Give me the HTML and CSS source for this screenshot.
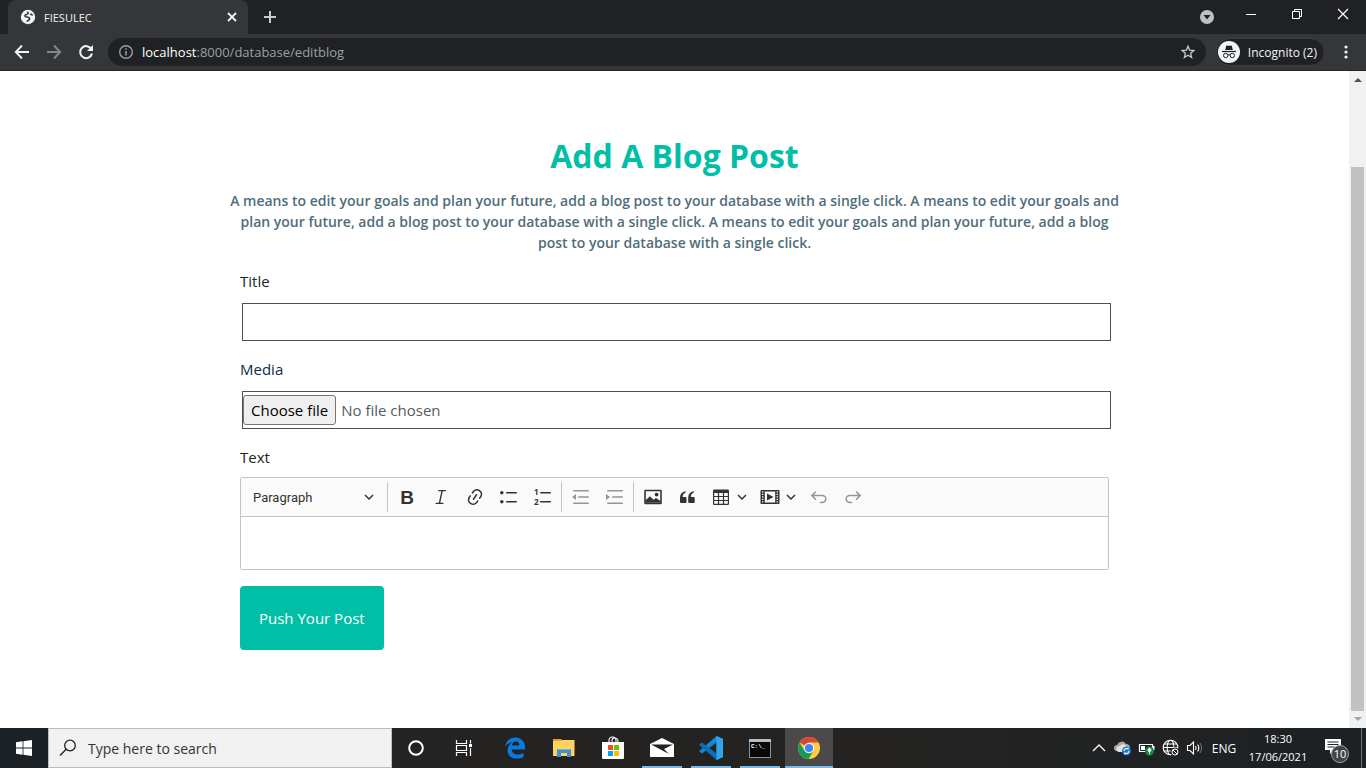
FILE: index.html
```html
<!DOCTYPE html>
<html lang="en">
<head>
<meta charset="utf-8">
<title>FIESULEC</title>
<link rel="stylesheet" href="styles.css">
</head>
<body>
<div class="desktop">
  <header class="browser">
    <div class="tabstrip">
      <div class="tab">
        <svg class="favicon" width="16" height="16" viewBox="0 0 16 16"><circle cx="8" cy="8" r="7.2" fill="#f1f3f4"/><path d="M7 3.200c1.500 0 1.300 1.200.6 1.800-.8.700-2.600.6-2.700 1.900 0 1.100 1.800 1 3.200 1.300 1.600.3 1.900 1.500 1.100 2.400-.6.700-1.800 1-2.400 2M10.500 4.500c.2 1.200 1.200 1.400 2.300 1.500" fill="none" stroke="#35363a" stroke-width="1.600"/></svg>
        <span class="tab-title">FIESULEC</span>
        <button class="icon-btn tab-close" aria-label="Close tab"><svg width="10" height="10" viewBox="0 0 10 10"><path d="M1 1l8 8M9 1L1 9" stroke="#f1f3f4" stroke-width="1.800"/></svg></button>
      </div>
      <button class="icon-btn new-tab" aria-label="New tab"><svg width="14" height="14" viewBox="0 0 14 14"><path d="M7 1v12M1 7h12" stroke="#c8cacd" stroke-width="2"/></svg></button>
      <div class="window-controls">
        <button class="icon-btn win-search" aria-label="Search tabs"><svg width="16" height="16" viewBox="0 0 16 16"><circle cx="8" cy="8" r="7" fill="#bdc1c6"/><path d="M4.500 6h7L8 10.500z" fill="#202124"/></svg></button>
        <button class="icon-btn win-btn" aria-label="Minimize"><svg width="10" height="10" viewBox="0 0 10 10"><path d="M0 5.500h10" stroke="#fff"/></svg></button>
        <button class="icon-btn win-btn" aria-label="Restore"><svg width="10" height="10" viewBox="0 0 10 10"><path d="M.5 2.500h7v7h-7zM2.500 2.500v-2h7v7h-2" fill="none" stroke="#fff"/></svg></button>
        <button class="icon-btn win-btn" aria-label="Close"><svg width="12" height="12" viewBox="0 0 12 12"><path d="M1 1l10 10M11 1L1 11" stroke="#fff" stroke-width="1.200"/></svg></button>
      </div>
    </div>
    <div class="navbar">
      <button class="icon-btn nav-btn" aria-label="Back"><svg width="16" height="16" viewBox="0 0 16 16"><path d="M15 8H2M8 1.500L1.800 8 8 14.500" fill="none" stroke="#f1f3f4" stroke-width="1.900"/></svg></button>
      <button class="icon-btn nav-btn" aria-label="Forward"><svg width="16" height="16" viewBox="0 0 16 16"><path d="M1 8h13M8 1.500L14.200 8 8 14.500" fill="none" stroke="#85878a" stroke-width="1.900"/></svg></button>
      <button class="icon-btn nav-btn" aria-label="Reload"><svg width="16" height="16" viewBox="0 0 16 16"><path d="M13.300 5A6 6 0 1 0 14 9.500" fill="none" stroke="#f1f3f4" stroke-width="2"/><path d="M15 1v6H9z" fill="#f1f3f4"/></svg></button>
      <div class="omnibox">
        <svg width="16" height="16" viewBox="0 0 16 16"><circle cx="8" cy="8" r="6.300" fill="none" stroke="#9aa0a6" stroke-width="1.400"/><path d="M8 7v4.500M8 4.300v1.500" stroke="#9aa0a6" stroke-width="1.500"/></svg>
        <a class="url" href="#"><span class="url-host">localhost</span>:8000/database/editblog</a>
        <button class="icon-btn star" aria-label="Bookmark"><svg width="16" height="16" viewBox="0 0 16 16"><path d="M8 2.200l1.600 4 4.300.3-3.300 2.800 1 4.200L8 11.300l-3.600 2.200 1-4.200-3.300-2.800 4.300-.3z" fill="none" stroke="#c8cacd" stroke-width="1.300"/></svg></button>
      </div>
      <button class="profile">
        <svg width="22" height="22" viewBox="0 0 22 22"><circle cx="11" cy="11" r="11" fill="#f1f3f4"/><path d="M7.200 9l1-4.200 1.500-.4 1.300.5 1.300-.5 1.500.4 1 4.200z" fill="#202124"/><path d="M4 10.500h14" stroke="#202124" stroke-width="1.200"/><g fill="none" stroke="#202124" stroke-width="1"><circle cx="7.700" cy="14.500" r="2.200"/><circle cx="14.300" cy="14.500" r="2.200"/><path d="M10 14c.7-.4 1.300-.4 2 0"/></g></svg>
        <span>Incognito (2)</span>
      </button>
      <button class="icon-btn menu" aria-label="Menu"><svg width="4" height="16" viewBox="0 0 4 16" fill="#f1f3f4"><circle cx="2" cy="3" r="1.600"/><circle cx="2" cy="8" r="1.600"/><circle cx="2" cy="13" r="1.600"/></svg></button>
    </div>
  </header>

  <div class="viewport">
    <main class="page">
      <form class="post-form">
        <h1 class="heading">Add A Blog Post</h1>
        <p class="intro">A means to edit your goals and plan your future, add a blog post to your database with a single click. A means to edit your goals and plan your future, add a blog post to your database with a single click. A means to edit your goals and plan your future, add a blog post to your database with a single click.</p>
        <label class="label" for="title">Title</label>
        <input class="field" id="title" type="text">
        <label class="label label-media" for="media">Media</label>
        <div class="field file-field">
          <input class="file-input" id="media" type="file">
          <label class="file-button" for="media">Choose file</label>
          <span class="file-name">No file chosen</span>
        </div>
        <label class="label" for="text">Text</label>
        <div class="editor">
          <div class="toolbar">
            <div class="style-picker">
              <select class="style-select" aria-label="Heading"><option>Paragraph</option></select>
              <svg class="caret" width="10" height="10" viewBox="0 0 10 10"><path d="M1 3l4 4 4-4"/></svg>
            </div>
            <span class="sep"></span>
            <button type="button" class="tool" aria-label="Bold"><svg width="20" height="20" viewBox="0 0 20 20"><text class="glyph-bold" x="10" y="17" text-anchor="middle">B</text></svg></button>
            <button type="button" class="tool" aria-label="Italic"><svg width="20" height="20" viewBox="0 0 20 20"><path d="M7.800 3.600h6.600M5.200 16.400h6.600M11.200 3.600L8.400 16.400" fill="none" stroke="#333" stroke-width="1.400" stroke-linecap="round"/></svg></button>
            <button type="button" class="tool" aria-label="Link"><svg width="20" height="20" viewBox="0 0 20 20" fill="#333"><path d="m11.077 15 .991-1.416a.75.75 0 1 1 1.229.86l-1.148 1.640a.748.748 0 0 1-.217.206 5.251 5.251 0 0 1-8.503-5.955.741.741 0 0 1 .12-.274l1.147-1.639a.75.75 0 1 1 1.228.86L4.933 10.700l.006.003a3.750 3.750 0 0 0 6.132 4.294l.006.004zm5.494-5.335a.748.748 0 0 1-.12.274l-1.147 1.639a.75.75 0 1 1-1.228-.86l.86-1.230a3.750 3.750 0 0 0-6.144-4.301l-.86 1.229a.75.75 0 0 1-1.229-.86l1.148-1.640a.748.748 0 0 1 .217-.206 5.251 5.251 0 0 1 8.503 5.955zm-4.563-2.532a.75.75 0 0 1 .184 1.045l-3.155 4.505a.75.75 0 1 1-1.229-.86l3.155-4.506a.75.75 0 0 1 1.045-.184z"/></svg></button>
            <button type="button" class="tool" aria-label="Bulleted list"><svg width="20" height="20" viewBox="0 0 20 20" fill="#333"><circle cx="2.800" cy="5.800" r="1.750"/><circle cx="2.800" cy="14.800" r="1.750"/><rect x="7" y="5" width="11" height="1.500" rx=".7"/><rect x="7" y="14" width="11" height="1.500" rx=".7"/></svg></button>
            <button type="button" class="tool" aria-label="Numbered list"><svg width="20" height="20" viewBox="0 0 20 20" fill="#333"><text class="glyph-number" x="1" y="8">1</text><text class="glyph-number" x="1" y="18">2</text><rect x="7" y="5" width="11" height="1.500" rx=".7"/><rect x="7" y="14" width="11" height="1.500" rx=".7"/></svg></button>
            <span class="sep"></span>
            <button type="button" class="tool" aria-label="Decrease indent" disabled><svg width="20" height="20" viewBox="0 0 20 20" fill="#333"><rect x="2" y="3" width="16" height="1.500" rx=".7"/><rect x="7" y="9.300" width="11" height="1.500" rx=".7"/><rect x="2" y="15.500" width="16" height="1.500" rx=".7"/><path d="M5 7v6L1 10z"/></svg></button>
            <button type="button" class="tool" aria-label="Increase indent" disabled><svg width="20" height="20" viewBox="0 0 20 20" fill="#333"><rect x="2" y="3" width="16" height="1.500" rx=".7"/><rect x="7" y="9.300" width="11" height="1.500" rx=".7"/><rect x="2" y="15.500" width="16" height="1.500" rx=".7"/><path d="M1 7v6l4-3z"/></svg></button>
            <span class="sep"></span>
            <button type="button" class="tool" aria-label="Insert image"><svg width="20" height="20" viewBox="0 0 20 20"><rect x="2" y="3.500" width="16" height="13" rx=".5" fill="none" stroke="#333" stroke-width="1.600"/><path d="M2.500 15.800v-2.600l4.500-4 3.500 3.600 2.500-1.800 4.500 3v1.800z" fill="#333"/><circle cx="13.600" cy="7.600" r="1.900" fill="#333"/></svg></button>
            <button type="button" class="tool" aria-label="Block quote"><svg width="20" height="20" viewBox="0 0 20 20" fill="#333"><path id="quote" d="M3 10.400a6.500 6.500 0 0 1 5.600-6.200l.3 1A5 5 0 0 0 5.800 8.400q-.3.800 0 1.600H8.500q1 0 1 1v4.100q0 1-1 1H4q-1 0-1-1z"/><use href="#quote" x="8.200"/></svg></button>
            <button type="button" class="tool tool-drop" aria-label="Insert table"><svg width="20" height="20" viewBox="0 0 20 20"><rect x="2" y="2.500" width="16" height="15.500" rx="1.200" fill="#333"/><g fill="#fafafa"><path d="M3.200 6h3.700v3H3.200zM8.100 6h3.800v3H8.100zM13.100 6h3.700v3h-3.700zM3.200 10h3.700v3H3.200zM8.100 10h3.800v3H8.100zM13.100 10h3.700v3h-3.700zM3.200 14h3.700v2.800H3.200zM8.100 14h3.800v2.800H8.100zM13.100 14h3.700v2.800h-3.700z"/></g></svg><svg class="caret" width="10" height="10" viewBox="0 0 10 10"><path d="M1 3l4 4 4-4"/></svg></button>
            <button type="button" class="tool tool-drop" aria-label="Insert media"><svg width="20" height="20" viewBox="0 0 20 20"><rect x=".5" y="3" width="19" height="14" rx=".8" fill="#333"/><path d="M4.800 4.500h10.400v11H4.800z" fill="#fafafa"/><path d="M2.700 4.200v12M17.300 4.200v12" stroke="#fafafa" stroke-width="1.400" stroke-dasharray="1.400 1.100"/><path d="M7 6.500v7L13.500 10z" fill="#333"/></svg><svg class="caret" width="10" height="10" viewBox="0 0 10 10"><path d="M1 3l4 4 4-4"/></svg></button>
            <button type="button" class="tool" aria-label="Undo" disabled><svg width="20" height="20" viewBox="0 0 20 20"><path d="M6.500 5L2.800 8.600l3.700 3.600M3 8.600h10.300a3.500 3.500 0 0 1 0 7H11.500" fill="none" stroke="#333" stroke-width="1.500" stroke-linecap="round"/></svg></button>
            <button type="button" class="tool" aria-label="Redo" disabled><svg width="20" height="20" viewBox="0 0 20 20"><path d="M13.500 5l3.700 3.600-3.700 3.600M17 8.600H6.700a3.500 3.500 0 0 0 0 7H8.500" fill="none" stroke="#333" stroke-width="1.500" stroke-linecap="round"/></svg></button>
          </div>
          <textarea class="editable" id="text" rows="1"></textarea>
        </div>
        <button class="submit" type="submit">Push Your Post</button>
      </form>
    </main>
    <div class="scrollbar">
      <svg width="17" height="17" viewBox="0 0 17 17"><path d="M5 11h8L9 7z" fill="#505050"/></svg>
      <div class="track"><div class="thumb"></div></div>
      <svg width="17" height="17" viewBox="0 0 17 17"><path d="M5 6h8l-4 4z" fill="#a3a3a3"/></svg>
    </div>
  </div>

  <footer class="taskbar">
    <button class="icon-btn task" aria-label="Start"><svg width="16" height="16" viewBox="0 0 16 16" fill="#fff"><path d="M0 2.200L6.600 1.300v6.300H0zM7.400 1.200L16 0v7.600H7.400zM0 8.400h6.600v6.300L0 13.800zM7.400 8.400H16V16l-8.600-1.200z"/></svg></button>
    <div class="search">
      <svg width="18" height="18" viewBox="0 0 18 18"><circle cx="11" cy="6.500" r="5.300" fill="none" stroke="#222" stroke-width="1.300"/><path d="M7.200 10.300L1 16.500" stroke="#222" stroke-width="1.400"/></svg>
      <input class="search-input" type="text" placeholder="Type here to search" aria-label="Type here to search">
    </div>
    <button class="icon-btn task" aria-label="Cortana"><svg width="18" height="18" viewBox="0 0 18 18"><circle cx="9" cy="9" r="6.800" fill="none" stroke="#fff" stroke-width="2"/></svg></button>
    <button class="icon-btn task" aria-label="Task view"><svg width="18" height="18" viewBox="0 0 18 18"><path d="M1.500 1v3.500h10V1M1.500 17v-3.500h10V17M1.500 6.500h10v5h-10zM15.500 1v3.500M15.500 9v8" fill="none" stroke="#fff" stroke-width="1.200"/><rect x="14" y="5" width="3" height="3" fill="#fff"/></svg></button>
    <div class="apps">
      <button class="icon-btn task" aria-label="Edge"><svg width="22" height="22" viewBox="0 0 22 22"><path d="M1 10C2 3.500 6.500.500 11.200.5 17.500.5 21 5 21 10v2.500H7.700c.2 3.300 2.800 5 6.100 5 2.300 0 4.100-.6 5.700-1.500v4c-1.800 1-4.100 1.500-6.700 1.500C7 21.500 3.600 18 3.600 13.300c0-3.600 2-6.500 5-8C5.500 5.500 2.700 7.200 1 10zm6.900-1.500h7.400c0-2.600-1.300-4-3.500-4-2.100 0-3.500 1.500-3.900 4z" fill="#0a7bdc"/></svg></button>
      <button class="icon-btn task" aria-label="File Explorer"><svg width="22" height="20" viewBox="0 0 22 20"><path d="M0 1h8l2 2H0z" fill="#e8a317"/><path d="M0 3h8l1-1h12.500v16H0z" fill="#ffd35c"/><path d="M4 19v-8h14v8h-4v-4H8v4z" fill="#3f92d2"/><path d="M5 11h12v1H5z" fill="#70b7e8"/></svg></button>
      <button class="icon-btn task" aria-label="Store"><svg width="24" height="24" viewBox="0 0 24 24"><path d="M8 7V4.500C8 2.500 9.500 1 11.500 1S15 2.500 15 4.500V7M11 7V4.500C11 3 12 2 13.500 2S17 3 17 5v2" fill="none" stroke="#fff" stroke-width="1.100"/><path d="M1 6h22v16q0 1-1 1H2q-1 0-1-1z" fill="#fff"/><path d="M7 9h5v5H7z" fill="#f25022"/><path d="M13 9h5v5h-5z" fill="#7fba00"/><path d="M7 15h5v5H7z" fill="#00a4ef"/><path d="M13 15h5v5h-5z" fill="#ffb900"/></svg></button>
      <button class="icon-btn task running" aria-label="Mail"><svg width="24" height="20" viewBox="0 0 24 20"><path d="M0 6l12-6 12 6v13H0z" fill="#fff"/><path d="M1 6.500h22l-9 4.500 5 5-17-9z" fill="#242322"/></svg></button>
      <button class="icon-btn task running" aria-label="Visual Studio Code"><svg width="24" height="24" viewBox="0 0 24 24"><path d="M17.500 0L24 3v18l-6.500 3V6.500L3 17.500l-3-2.200z" fill="#1c86cc"/><path d="M0 8.700l3-2.200 14.500 11V24L0 8.700z" fill="#0b70b8"/><path d="M17.500 0L24 3v18l-6.500 3z" fill="#30a5ee"/></svg></button>
      <button class="icon-btn task running" aria-label="Command Prompt"><svg width="22" height="20" viewBox="0 0 22 20"><rect x=".5" y="1.500" width="21" height="18" fill="#080808" stroke="#8c9499"/><path d="M0 1h22v3H0z" fill="#b7bdc1"/><text class="glyph-cmd" x="2" y="10">C:\_</text></svg></button>
      <button class="icon-btn task running active" aria-label="Chrome"><svg width="22" height="22" viewBox="0 0 22 22"><circle cx="11" cy="11" r="11" fill="#ffcd40"/><path d="M11 11L1.500 5.500A11 11 0 0 1 20.500 5.500H11z" fill="#db4437"/><path d="M1.500 5.500A11 11 0 0 0 10.500 22l5-8.300L11 11 6.300 13.500z" fill="#0f9d58"/><circle cx="11" cy="11" r="5.200" fill="#f4f4f4"/><circle cx="11" cy="11" r="4.100" fill="#4285f4"/></svg></button>
    </div>
    <div class="tray">
      <button class="icon-btn tray-icon" aria-label="Show hidden icons"><svg width="14" height="10" viewBox="0 0 14 10"><path d="M1 8l6-6 6 6" fill="none" stroke="#fff" stroke-width="1.300"/></svg></button>
      <button class="icon-btn tray-icon" aria-label="OneDrive"><svg width="18" height="16" viewBox="0 0 18 16"><path d="M3 11a3 3 0 0 1 0-6 5 5 0 0 1 9-1 4 4 0 0 1 4 4v3z" fill="#a9a9a9"/><path d="M5 12a3 3 0 0 1 1-6 4 4 0 0 1 7 1v5z" fill="#e3e3e3"/><circle cx="12.500" cy="11" r="4.500" fill="#1976d2"/><path d="M10 11a2.500 2.500 0 0 1 4-2v-1.500M15 11a2.500 2.500 0 0 1-4 2v1.500" fill="none" stroke="#fff" stroke-width="1.100"/></svg></button>
      <button class="icon-btn tray-icon" aria-label="Battery"><svg width="18" height="16" viewBox="0 0 18 16"><path d="M1.500 4.500h13v7h-13z" fill="none" stroke="#fff" stroke-width="1.200"/><path d="M3 6h4v4H3zM15 6h1.500v4H15z" fill="#fff"/><circle cx="11.500" cy="11" r="4.500" fill="#10893e"/><path d="M11.500 8c2 1.500 2 3 0 4-2-1-2-2.500 0-4zM11.500 10v4.500" stroke="#fff" stroke-width=".8" fill="#fff"/></svg></button>
      <button class="icon-btn tray-icon" aria-label="Network"><svg width="18" height="18" viewBox="0 0 18 18"><g fill="none" stroke="#fff" stroke-width="1.100"><circle cx="8.500" cy="8.500" r="7.300"/><ellipse cx="8.500" cy="8.500" rx="3.400" ry="7.300"/><path d="M2 5h13M1.200 8.500h14.600M2 12h13"/></g><circle cx="13" cy="13" r="4.500" fill="#202326"/><circle cx="13" cy="13" r="3" fill="none" stroke="#fff"/><path d="M11 11l4 4" stroke="#fff"/></svg></button>
      <button class="icon-btn tray-icon" aria-label="Volume"><svg width="18" height="16" viewBox="0 0 18 16"><path d="M1.500 5.500h2.500L7.500 2v12L4 10.500H1.500z" fill="none" stroke="#fff" stroke-width="1.100"/><path d="M9.500 6q1.300 2 0 4M11.700 4.500q2.200 3.500 0 7" fill="none" stroke="#fff" stroke-width="1.100"/><path d="M14 3q3.200 5 0 10" fill="none" stroke="#777"/></svg></button>
      <button class="icon-btn language">ENG</button>
      <button class="icon-btn clock"><span>18:30</span><span>17/06/2021</span></button>
      <button class="icon-btn notices" aria-label="Notifications"><svg width="32" height="30" viewBox="0 0 32 30"><path d="M3 6h16v11h-7l-4 4v-4H3z" fill="#fff"/><path d="M5.500 9h11M5.500 11.500h11M5.500 14h7" stroke="#202326"/><circle cx="18" cy="21" r="8.500" fill="#414345" stroke="#a2a3a4"/><text class="glyph-count" x="18" y="25" text-anchor="middle">10</text></svg></button>
      <div class="show-desktop"></div>
    </div>
  </footer>
</div>
</body>
</html>
```
FILE: styles.css
```css
* {
  box-sizing: border-box;
}

body {
  margin: 0;
  font-family: "Open Sans", "Noto Sans", sans-serif;
}

button,
input,
textarea,
select {
  font: inherit;
}

svg {
  flex: none;
  display: block;
}

.desktop {
  display: flex;
  flex-direction: column;
  min-height: 100vh;
}

.icon-btn {
  display: flex;
  align-items: center;
  justify-content: center;
  padding: 0;
  border: 0;
  background: none;
  color: #fff;
}

/* Browser window */
.browser {
  background: #35363a;
  border-bottom: 1px solid #2a2325;
  color: #f1f3f4;
  font-size: 12px;
}

.tabstrip {
  display: flex;
  height: 34px;
  padding-left: 8px;
  background: #202124;
}

.tab {
  display: flex;
  align-items: center;
  gap: 8px;
  width: 240px;
  padding: 0 8px 0 12px;
  border-radius: 8px 8px 0 0;
  background: #35363a;
}

.tab-title {
  flex: 1;
  font-size: 11px;
}

.tab-close {
  width: 16px;
  height: 16px;
}

.new-tab {
  width: 44px;
}

.window-controls {
  display: flex;
  margin-left: auto;
}

.win-search {
  width: 42px;
}

.win-btn {
  width: 46px;
  padding-bottom: 6px;
}

.navbar {
  display: flex;
  align-items: center;
  height: 36px;
  padding-left: 6px;
}

.nav-btn {
  width: 32px;
  height: 32px;
}

.omnibox {
  display: flex;
  flex: 1;
  align-items: center;
  gap: 8px;
  height: 28px;
  margin: 0 10px 0 6px;
  padding: 0 10px;
  border-radius: 14px;
  background: #202124;
}

.url {
  flex: 1;
  color: #9aa0a6;
  font-size: 13px;
  text-decoration: none;
}

.url-host {
  color: #fff;
}

.profile {
  display: flex;
  align-items: center;
  gap: 8px;
  height: 28px;
  padding: 0 7px 0 1px;
  border: 1px solid #3c3d41;
  border-radius: 14px;
  background: #202124;
  color: #f1f3f4;
}

.menu {
  width: 41px;
  height: 32px;
}

/* Page */
.viewport {
  display: flex;
  flex: 1;
  background: #fff;
}

.page {
  flex: 1;
  padding: 59px 24px 0;
}

.post-form {
  max-width: 869px;
  margin: 0 auto;
  color: #212529;
  font-size: 15px;
}

.heading {
  margin: 0 0 8px;
  color: #00bfa6;
  font-size: 32px;
  font-weight: 700;
  line-height: 52px;
  text-align: center;
}

.intro {
  margin: 0 -12px 16px;
  color: #4f6d7a;
  font-size: 14px;
  font-weight: 600;
  line-height: 21px;
  text-align: center;
}

.label {
  display: block;
  line-height: 24px;
}

.label-media {
  color: #0b2c4d;
}

.field {
  display: flex;
  align-items: center;
  width: 100%;
  height: 38px;
  margin: 10px 2px 16px;
  border: 1px solid #495057;
  background: #fff;
}

.file-field {
  gap: 5px;
  color: #555b61;
}

.file-input {
  position: absolute;
  width: 1px;
  height: 1px;
  opacity: 0;
}

.file-button {
  padding: 0 7px;
  border: 1px solid #767676;
  border-radius: 3px;
  background: #efefef;
  color: #000;
  line-height: 28px;
}

.editor {
  margin-top: 8px;
  border: 1px solid #c4c4c4;
  border-radius: 2px;
}

.toolbar {
  display: flex;
  flex-wrap: wrap;
  align-items: center;
  min-height: 39px;
  border-bottom: 1px solid #c4c4c4;
  background: #fafafa;
}

.style-picker {
  display: flex;
  align-items: center;
  width: 145px;
  padding: 0 12px;
}

.style-select {
  flex: 1;
  min-width: 0;
  padding: 0;
  border: 0;
  appearance: none;
  background: none;
  color: #333;
  font-family: Roboto, sans-serif;
  font-size: 13px;
}

.caret {
  fill: none;
  stroke: #333;
  stroke-width: 1.5;
}

.sep {
  width: 1px;
  height: 30px;
  margin: 0 2px 0 1px;
  background: #c4c4c4;
}

.tool {
  display: flex;
  align-items: center;
  justify-content: center;
  gap: 6px;
  width: 34px;
  height: 38px;
  padding: 0;
  border: 0;
  background: none;
}

.tool-drop {
  width: 49px;
}

.tool:disabled {
  opacity: 0.5;
}

.glyph-bold {
  fill: #333;
  font: bold 19px "Liberation Sans", sans-serif;
}

.glyph-number {
  font: bold 8px "Open Sans", sans-serif;
}

.editable {
  display: block;
  width: 100%;
  height: 52px;
  padding: 8px;
  border: 0;
  background: #fff;
  resize: none;
}

.submit {
  display: block;
  margin-top: 16px;
  padding: 20px 19px;
  border: 0;
  border-radius: 4px;
  background: #00bfa6;
  color: #fff;
  line-height: 24px;
}

.scrollbar {
  display: flex;
  flex-direction: column;
  width: 17px;
  background: #f1f1f1;
}

.track {
  flex: 1;
  padding: 79px 2px 0;
  display: flex;
}

.thumb {
  flex: 1;
  background: #c1c1c1;
}

/* Taskbar */
.taskbar {
  display: flex;
  height: 40px;
  background: linear-gradient(90deg, #1b2126, #242322 35%, #242322 65%, #1d2124);
  color: #fff;
}

.task {
  width: 48px;
  height: 40px;
}

.search {
  display: flex;
  align-items: center;
  gap: 11px;
  width: 344px;
  padding: 0 10px;
  border: 1px solid #bdbdbd;
  background: #f1f1f1;
}

.search-input {
  flex: 1;
  min-width: 0;
  padding: 0;
  border: 0;
  background: none;
  font-size: 14px;
}

.search-input::placeholder {
  color: #333;
}

.apps {
  display: flex;
  gap: 1px;
  padding-left: 3px;
}

.running {
  background: linear-gradient(#76b9ed, #76b9ed) bottom / 40px 2px no-repeat;
}

.active {
  background: linear-gradient(#76b9ed, #76b9ed) bottom / 100% 2px no-repeat, #4b4a49;
}

.glyph-cmd {
  fill: #fff;
  font: bold 6px "Liberation Mono", monospace;
}

.tray {
  display: flex;
  margin-left: auto;
  font-size: 12px;
}

.tray-icon {
  width: 24px;
}

.language {
  width: 34px;
  font-size: 12px;
}

.clock {
  flex-direction: column;
  width: 74px;
  font-size: 11px;
  line-height: 18px;
}

.notices {
  width: 46px;
}

.glyph-count {
  fill: #fff;
  font: 11px "Open Sans", sans-serif;
}

.show-desktop {
  width: 5px;
  border-left: 1px solid #6b6e70;
}
```
